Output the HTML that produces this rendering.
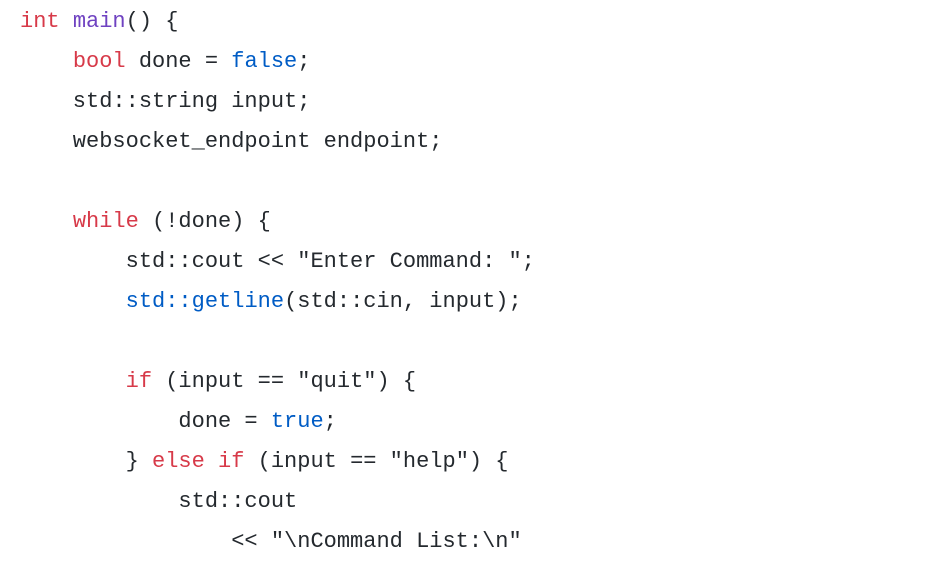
<!DOCTYPE html>
<html><head><meta charset="utf-8"><style>
html,body{margin:0;padding:0;background:#fff;width:932px;height:548px;overflow:hidden}
pre{margin:0;position:absolute;left:20px;top:2px;font-family:"Liberation Mono",monospace;font-size:22px;line-height:40px;color:#24292e;white-space:pre}
.k{color:#d73a49}.f{color:#6f42c1}.c{color:#005cc5}
</style></head><body>
<pre><span class="k">int</span> <span class="f">main</span>() {
    <span class="k">bool</span> done = <span class="c">false</span>;
    std::string input;
    websocket_endpoint endpoint;

    <span class="k">while</span> (!done) {
        std::cout &lt;&lt; "Enter Command: ";
        <span class="c">std::getline</span>(std::cin, input);

        <span class="k">if</span> (input == "quit") {
            done = <span class="c">true</span>;
        } <span class="k">else if</span> (input == "help") {
            std::cout
                &lt;&lt; "\nCommand List:\n"
</pre>
</body></html>
